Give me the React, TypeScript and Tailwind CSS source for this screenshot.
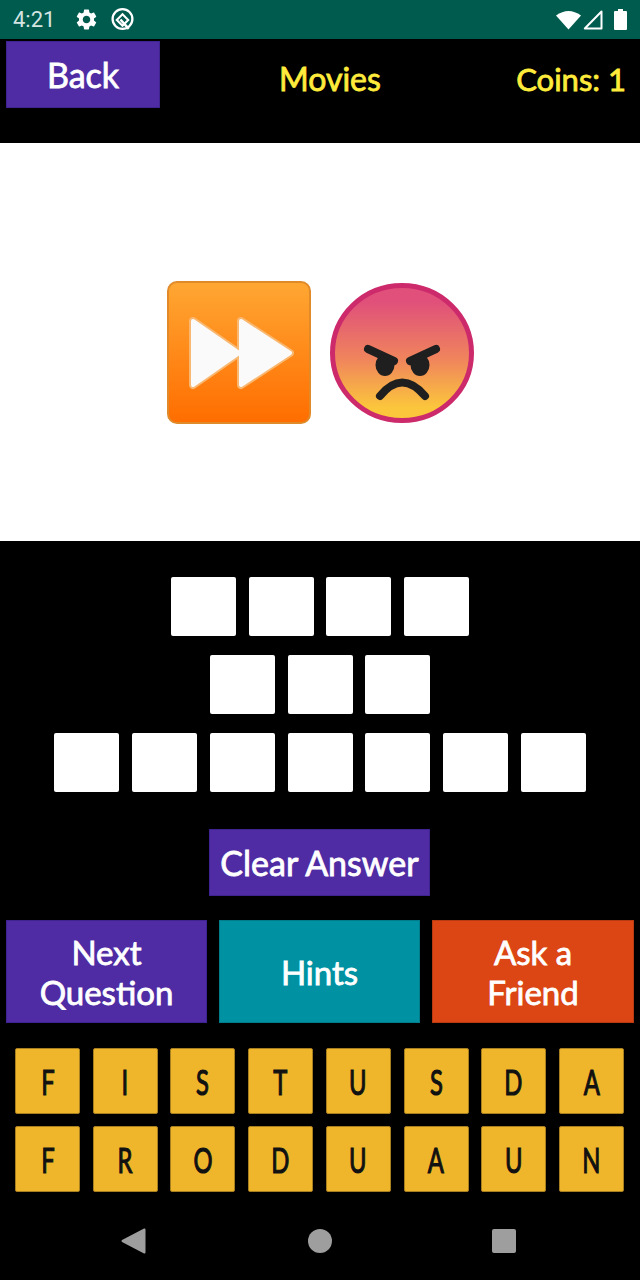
import { MdSettings } from 'react-icons/md'

const answerRows = [4, 3, 7]
const keyRows = [
  ['F', 'I', 'S', 'T', 'U', 'S', 'D', 'A'],
  ['F', 'R', 'O', 'D', 'U', 'A', 'U', 'N'],
]

function StatusBar() {
  return (
    <div className="flex h-[39px] shrink-0 items-center bg-[#005b4f] pl-[13px] pr-[13px] text-white [-webkit-text-stroke:0px]">
      <span className="w-[48px] font-['Roboto',sans-serif] text-[22px] leading-none text-[#d5e5e2]">4:21</span>
      <MdSettings className="ml-[13px] h-[25px] w-[25px]" />
      <svg className="ml-[11px] h-[25px] w-[25px]" viewBox="0 0 24 24" fill="none">
        <circle cx="12" cy="11.5" r="9.5" stroke="white" strokeWidth="2.2" />
        <path d="M6.5 12.5 12 7l5.5 5.5L12 18z" stroke="white" strokeWidth="2" />
        <path d="M10 12l8 9" stroke="white" strokeWidth="2.4" />
      </svg>
      <div className="ml-auto flex items-center">
        <svg className="h-[20px] w-[25px]" viewBox="0 0 25 20">
          <path d="M0 5.500Q12.500 -3.500 25 5.500L12.500 19.500z" fill="white" />
        </svg>
        <svg className="ml-[2px] h-[21px] w-[20px]" viewBox="0 0 20 21" fill="none">
          <path d="M18.500 2.500v17H1.800z" stroke="white" strokeWidth="2" strokeLinejoin="round" />
        </svg>
        <svg className="ml-[11px] h-[21px] w-[13px]" viewBox="0 0 13 21">
          <path d="M4 0h5v2h3a1 1 0 0 1 1 1v17a1 1 0 0 1-1 1H1a1 1 0 0 1-1-1V3a1 1 0 0 1 1-1h3z" fill="white" />
        </svg>
      </div>
    </div>
  )
}

function FastForwardEmoji() {
  return (
    <svg className="h-[144px] w-[144px]" viewBox="0 0 144 144">
      <defs>
        <linearGradient id="ffFill" x1="0" y1="0" x2="0" y2="1">
          <stop offset="0" stopColor="#ffa733" />
          <stop offset="1" stopColor="#ff6d00" />
        </linearGradient>
      </defs>
      <rect x="1" y="1" width="142" height="141" rx="9" fill="url(#ffFill)" stroke="#e08a2a" strokeWidth="2" />
      <path d="M26 40 72 72 26 104z" fill="#fafafa" stroke="#f9b871" strokeWidth="8" strokeLinejoin="round" />
      <path d="M74 40 123 72 74 104z" fill="#fafafa" stroke="#f9b871" strokeWidth="8" strokeLinejoin="round" />
      <path d="M26 40 72 72 26 104z" fill="#fafafa" stroke="#fafafa" strokeWidth="4" strokeLinejoin="round" />
      <path d="M74 40 123 72 74 104z" fill="#fafafa" stroke="#fafafa" strokeWidth="4" strokeLinejoin="round" />
    </svg>
  )
}

function AngryEmoji() {
  return (
    <svg className="h-[144px] w-[144px]" viewBox="0 0 144 144">
      <defs>
        <linearGradient id="angryFill" x1="0" y1="0" x2="0" y2="1">
          <stop offset="0.12" stopColor="#e0507a" />
          <stop offset="0.55" stopColor="#f0855c" />
          <stop offset="0.9" stopColor="#fbc53c" />
        </linearGradient>
      </defs>
      <ellipse cx="72" cy="72" rx="69.500" ry="67.500" fill="url(#angryFill)" stroke="#cd2a6c" strokeWidth="5" />
      <path d="M38 68 64 80" stroke="#1f1f1f" strokeWidth="8" strokeLinecap="round" />
      <path d="M106 68 80 80" stroke="#1f1f1f" strokeWidth="8" strokeLinecap="round" />
      <ellipse cx="55" cy="84" rx="9.500" ry="11" fill="#1f1f1f" />
      <ellipse cx="90" cy="84" rx="9.500" ry="11" fill="#1f1f1f" />
      <path d="M50 115Q72 88 95 115" fill="none" stroke="#1f1f1f" strokeWidth="8" strokeLinecap="round" />
    </svg>
  )
}

export default function App() {
  return (
    <div className="flex h-[1280px] w-[640px] flex-col overflow-hidden bg-black font-['Lato','Liberation_Sans',sans-serif] text-white [-webkit-text-stroke:0.8px]">
      <StatusBar />

      <header className="relative h-[104px] shrink-0 pl-[6px] pt-[2px]">
        <button className="h-[67px] w-[154px] border border-[#3f2390] bg-[#4f2ca3] text-[34px] leading-none">Back</button>
        <span className="absolute left-[279px] top-[20px] text-[32px] leading-[40px] text-[#ffeb3b]">Movies</span>
        <span className="absolute right-[14px] top-[20px] text-[31px] leading-[40px] text-[#ffeb3b]">Coins: 1</span>
      </header>

      <section className="flex h-[398px] shrink-0 items-center justify-center gap-[19px] bg-white pt-[22px]">
        <FastForwardEmoji />
        <AngryEmoji />
      </section>

      <section className="mt-[36px] flex flex-col items-center gap-[19px]">
        {answerRows.map((count, row) => (
          <div key={row} className="flex gap-[12.75px]">
            {Array.from({ length: count }).map((_, i) => (
              <div key={i} className="h-[59px] w-[65px] rounded-[2px] bg-white" />
            ))}
          </div>
        ))}
      </section>

      <button className="ml-[209px] mt-[37px] h-[67px] w-[221px] shrink-0 border border-[#3f2390] bg-[#4f2ca3] text-[34px] leading-none">
        Clear Answer
      </button>

      <div className="mt-[24px] flex h-[103px] shrink-0 gap-[12px] px-[6px] text-[33px] leading-[40px]">
        <button className="w-[201px] border border-[#3f2390] bg-[#4f2ca3]">Next<br />Question</button>
        <button className="w-[201px] border border-[#007c8a] bg-[#0092a3]">Hints</button>
        <button className="w-[202px] border border-[#b83a10] bg-[#db4614]">Ask a<br />Friend</button>
      </div>

      <div className="mt-[25px] flex flex-col gap-[12px] pl-[15px] pr-[16px]">
        {keyRows.map((keys, row) => (
          <div key={row} className="flex justify-between">
            {keys.map((letter, i) => (
              <div
                key={i}
                className="flex h-[66px] w-[65px] items-center justify-center rounded-[2px] border border-[#a87f1e] bg-[#f0b62b] text-[35px] text-[#111] [-webkit-text-stroke:1.2px]"
              >
                <span className="inline-block scale-x-[0.68]">{letter}</span>
              </div>
            ))}
          </div>
        ))}
      </div>

      <nav className="mt-[36px] flex items-center pl-[121px]">
        <svg className="h-[26px] w-[25px]" viewBox="0 0 25 26">
          <path d="M23.500 1.500v23L1.500 13z" fill="#9e9e9e" stroke="#9e9e9e" strokeWidth="2" strokeLinejoin="round" />
        </svg>
        <div className="ml-[162px] h-[24px] w-[24px] rounded-full bg-[#9e9e9e]" />
        <div className="ml-[160px] h-[24px] w-[24px] rounded-[2px] bg-[#9e9e9e]" />
      </nav>
    </div>
  )
}
